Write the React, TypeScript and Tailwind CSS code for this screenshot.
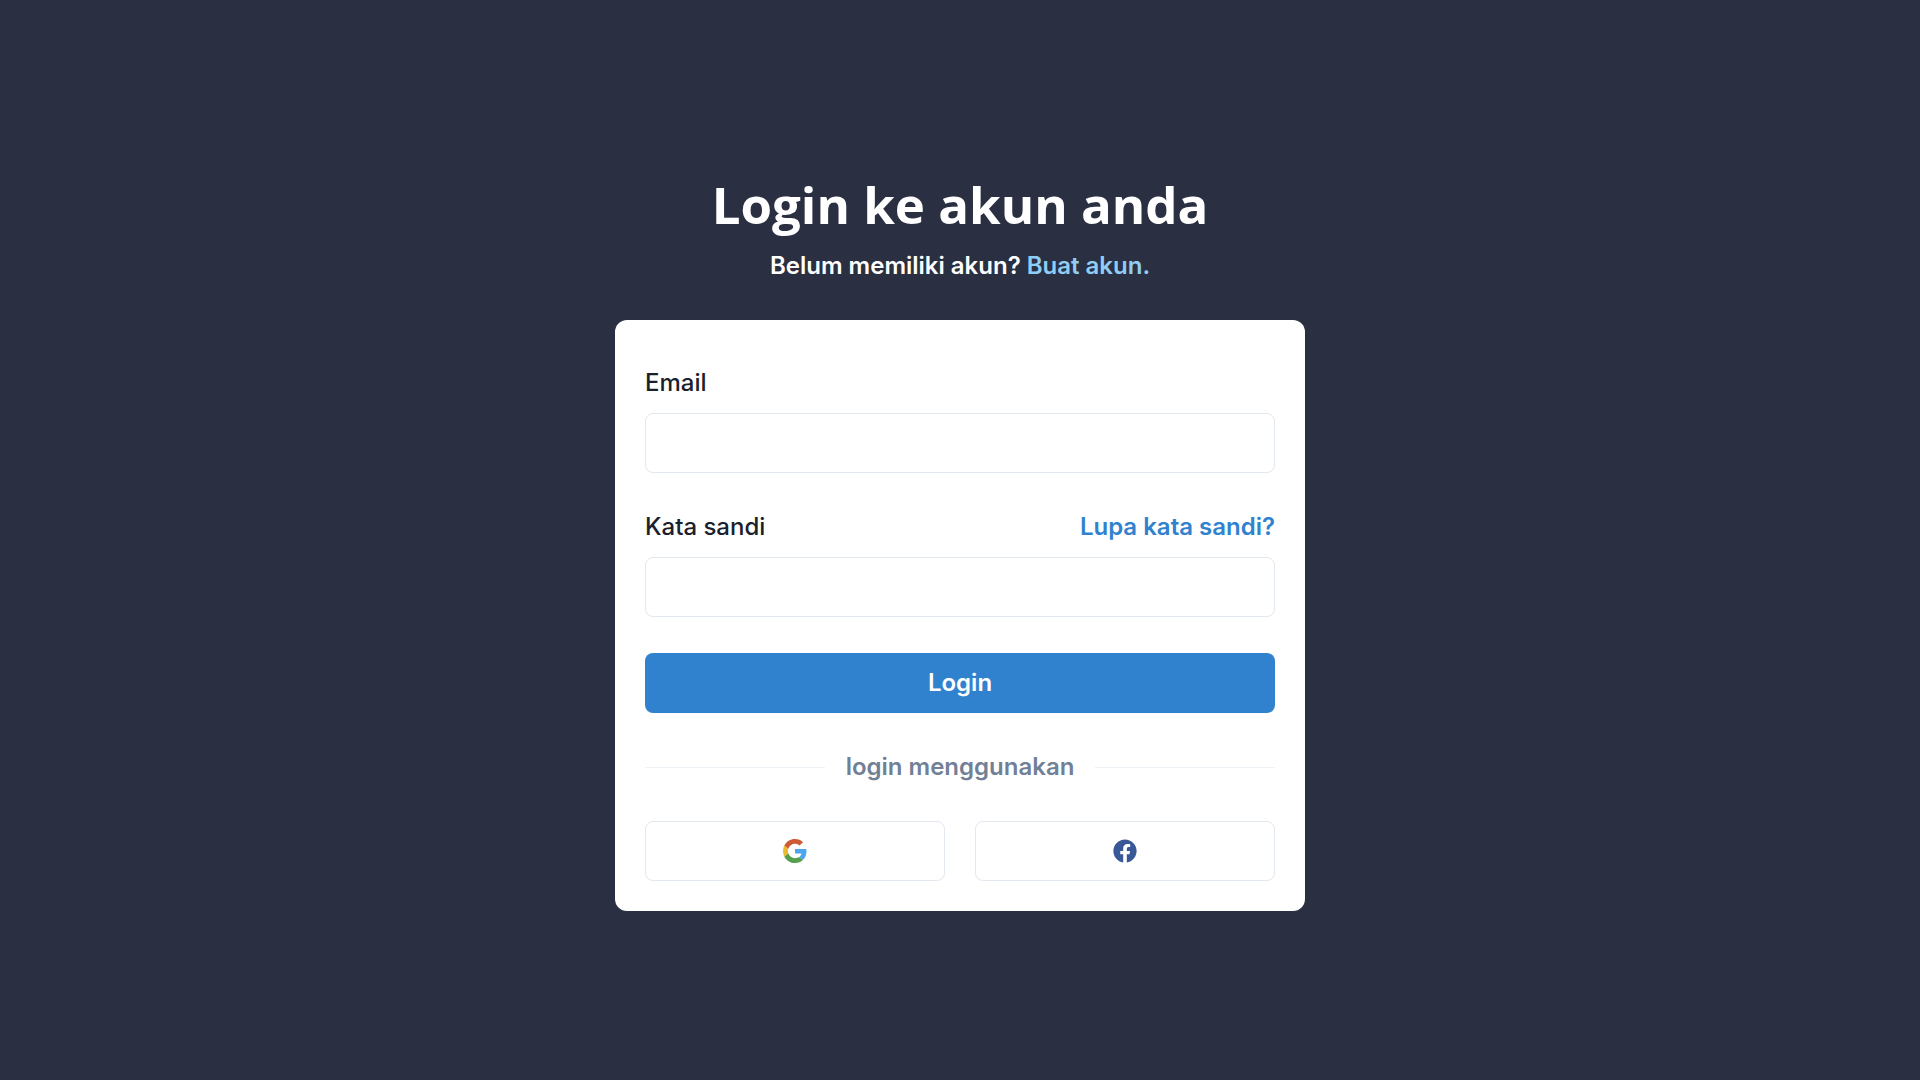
import React, { useState } from "react";
import { FaFacebook } from "react-icons/fa";

const GoogleIcon: React.FC = () => (
  <svg viewBox="0 0 48 48" className="size-6" aria-hidden="true">
    <path
      fill="#4ba6ee"
      d="M46.98 24.55c0-1.57-.15-3.09-.38-4.55H24v9.02h12.94c-.58 2.96-2.26 5.48-4.78 7.18l7.73 6c4.51-4.18 7.09-10.36 7.09-17.65z"
    />
    <path
      fill="#559f4e"
      d="M24 48c6.48 0 11.93-2.13 15.89-5.81l-7.73-6c-2.15 1.45-4.92 2.3-8.16 2.3-6.26 0-11.57-4.22-13.47-9.91l-7.98 6.19C6.51 42.62 14.62 48 24 48z"
    />
    <path
      fill="#ecb82e"
      d="M10.53 28.59c-.48-1.45-.76-2.99-.76-4.59s.27-3.14.76-4.59l-7.98-6.19C.92 16.46 0 20.12 0 24c0 3.88.92 7.54 2.56 10.78l7.97-6.19z"
    />
    <path
      fill="#cf5a36"
      d="M24 9.5c3.54 0 6.71 1.22 9.21 3.6l6.85-6.85C35.9 2.38 30.47 0 24 0 14.62 0 6.51 5.38 2.56 13.22l7.98 6.19C12.43 13.72 17.74 9.5 24 9.5z"
    />
  </svg>
);

const App: React.FC = () => {
  const [email, setEmail] = useState("");
  const [password, setPassword] = useState("");

  const inputClass =
    "block h-15 w-full rounded-lg border border-[#e2e8f0] bg-white px-5 text-2xl focus:outline-none focus:ring-2 focus:ring-blue-500";

  return (
    <main className="flex min-h-screen flex-col items-center bg-[#2a2f42] px-4 pt-42 pb-10 font-['Inter',sans-serif] text-2xl text-[#1a202c]">
      <h1 className="text-center font-['Open_Sans',sans-serif] text-[51px] leading-18 font-bold text-white">
        Login ke akun anda
      </h1>
      <p className="mt-2 text-center leading-9 font-semibold text-white">
        Belum memiliki akun?{" "}
        <a href="#register" className="text-[#90cdf4]">
          Buat akun.
        </a>
      </p>

      <div className="mt-9 w-full max-w-[690px] rounded-xl bg-white px-[30px] pt-[45px] pb-[30px]">
        <form onSubmit={(e) => e.preventDefault()}>
          <label htmlFor="email" className="mb-3 block leading-9 font-medium">
            Email
          </label>
          <input
            id="email"
            type="email"
            value={email}
            onChange={(e) => setEmail(e.target.value)}
            className={inputClass}
          />

          <div className="mt-9 mb-3 flex justify-between leading-9">
            <label htmlFor="password" className="font-medium">
              Kata sandi
            </label>
            <a href="#forgot" className="font-semibold text-[#3182ce]">
              Lupa kata sandi?
            </a>
          </div>
          <input
            id="password"
            type="password"
            value={password}
            onChange={(e) => setPassword(e.target.value)}
            className={inputClass}
          />

          <button
            type="submit"
            className="mt-9 h-15 w-full cursor-pointer rounded-lg bg-[#3182ce] font-semibold text-white"
          >
            Login
          </button>
        </form>

        {/* Divider */}
        <div className="mt-9 flex items-center gap-[21px]">
          <hr className="flex-1 border-[#edf2f7]" />
          <span className="leading-9 font-semibold text-[#718096]">
            login menggunakan
          </span>
          <hr className="flex-1 border-[#edf2f7]" />
        </div>

        {/* Social buttons */}
        <div className="mt-9 grid grid-cols-2 gap-[30px]">
          <button
            type="button"
            aria-label="Google"
            className="flex h-15 cursor-pointer items-center justify-center rounded-lg border border-[#e2e8f0]"
          >
            <GoogleIcon />
          </button>
          <button
            type="button"
            aria-label="Facebook"
            className="flex h-15 cursor-pointer items-center justify-center rounded-lg border border-[#e2e8f0]"
          >
            <FaFacebook className="size-6 text-[#385898]" />
          </button>
        </div>
      </div>
    </main>
  );
};

export default App;
